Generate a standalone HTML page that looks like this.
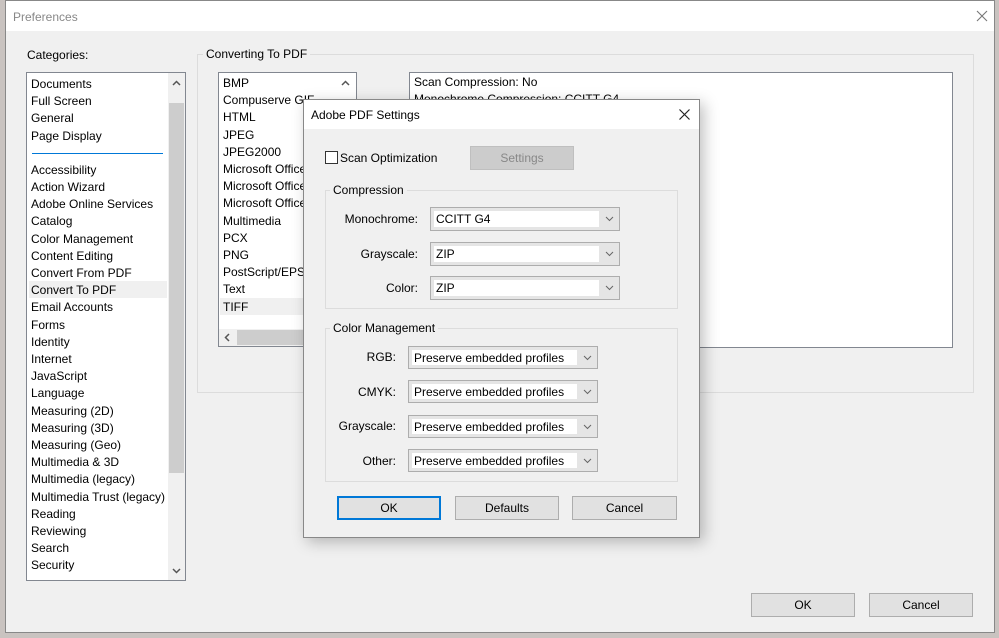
<!DOCTYPE html>
<html><head><meta charset="utf-8"><style>
*{box-sizing:border-box;margin:0;padding:0}
body{width:999px;height:638px;overflow:hidden;background:#c9c3c0;font-family:"Liberation Sans",sans-serif;font-size:12px;color:#000;position:relative}
.a{position:absolute}
.t{position:absolute;white-space:nowrap;line-height:14px}
.win{left:5px;top:0;width:990px;height:633px;background:#f0f0f0;border:1px solid #888}
.list{background:#fff;border:1px solid #828790;overflow:hidden}
.grp{border:1px solid #dcdcdc}
.lbl{background:#f0f0f0;padding:0 3px}
.btn{border:1px solid #adadad;background:#e1e1e1;text-align:center;line-height:22px}
.sel{border:1px solid #adadad;background:#e5e5e5}
.sel .in{position:absolute;left:3px;top:3px;bottom:3px;right:20px;background:#fff;padding-left:2px;line-height:16px}
.sel svg{position:absolute;right:5px;top:8px}
.r{text-align:right}
</style></head><body>
<div class="a win">
 <div class="a" style="left:0;top:0;width:988px;height:30px;background:#fff"></div>
 <div class="t" style="left:7px;top:9px;color:#888">Preferences</div>
 <svg class="a" style="left:970px;top:9px" width="12" height="12"><path d="M1 1L11 11M11 1L1 11" stroke="#777" stroke-width="1.1"/></svg>
</div>
<div class="t" style="left:27px;top:48px">Categories:</div>
<div class="a list" style="left:26px;top:72px;width:160px;height:509px">
 <div class="a" style="left:141px;top:0;width:17px;height:507px;background:#f0f0f0"></div>
 <div class="a" style="left:142px;top:30px;width:15px;height:370px;background:#cdcdcd"></div>
 <svg class="a" style="left:145px;top:7px" width="9" height="6"><path d="M1 5L4.5 1.5L8 5" stroke="#555" fill="none" stroke-width="1.5"/></svg>
 <svg class="a" style="left:145px;top:495px" width="9" height="6"><path d="M1 1L4.5 4.5L8 1" stroke="#555" fill="none" stroke-width="1.5"/></svg>
 <div class="a" style="left:5px;top:80px;width:131px;height:1px;background:#0078d7"></div>
 <div class="a" style="left:2px;top:208px;width:138px;height:17px;background:#f0f0f0"></div>
</div>
<div class="a" style="left:31px;top:76px;line-height:17.2px">
Documents<br>Full Screen<br>General<br>Page Display<br><div style="height:17px"></div>Accessibility<br>Action Wizard<br>Adobe Online Services<br>Catalog<br>Color Management<br>Content Editing<br>Convert From PDF<br>Convert To PDF<br>Email Accounts<br>Forms<br>Identity<br>Internet<br>JavaScript<br>Language<br>Measuring (2D)<br>Measuring (3D)<br>Measuring (Geo)<br>Multimedia &amp; 3D<br>Multimedia (legacy)<br>Multimedia Trust (legacy)<br>Reading<br>Reviewing<br>Search<br>Security
</div>
<div class="a" style="left:27px;top:576px;width:140px;height:4px;background:#fff"></div>
<div class="a grp" style="left:197px;top:54px;width:777px;height:339px"></div>
<div class="t lbl" style="left:203px;top:47px">Converting To PDF</div>
<div class="a list" style="left:218px;top:72px;width:139px;height:275px">
 <div class="a" style="left:1px;top:225px;width:136px;height:17px;background:#f0f0f0"></div>
 <div class="a" style="left:0;top:256px;width:137px;height:17px;background:#f0f0f0"></div>
 <div class="a" style="left:18px;top:257px;width:119px;height:15px;background:#cdcdcd"></div>
 <svg class="a" style="left:5px;top:260px" width="6" height="9"><path d="M5 1L1.5 4.5L5 8" stroke="#555" fill="none" stroke-width="1.5"/></svg>
 <svg class="a" style="left:122px;top:7px" width="9" height="6"><path d="M1 5L4.5 1.5L8 5" stroke="#555" fill="none" stroke-width="1.5"/></svg>
</div>
<div class="a" style="left:223px;top:75px;line-height:17.2px">BMP<br>Compuserve GIF<br>HTML<br>JPEG<br>JPEG2000<br>Microsoft Office<br>Microsoft Office<br>Microsoft Office<br>Multimedia<br>PCX<br>PNG<br>PostScript/EPS<br>Text<br>TIFF</div>
<div class="a list" style="left:409px;top:72px;width:544px;height:276px"></div>
<div class="t" style="left:414px;top:75px">Scan Compression: No</div>
<div class="t" style="left:414px;top:92px">Monochrome Compression: CCITT G4</div>

<div class="a" style="left:303px;top:99px;width:397px;height:439px;background:#f0f0f0;border:1px solid #888;box-shadow:4px 4px 14px rgba(0,0,0,.25)">
 <div class="a" style="left:0;top:0;width:395px;height:29px;background:#fff"></div>
 <svg class="a" style="left:375px;top:9px" width="11" height="11"><path d="M0.5 0.5L10.5 10.5M10.5 0.5L0.5 10.5" stroke="#222" stroke-width="1.2"/></svg>
</div>
<div class="t" style="left:311px;top:108px">Adobe PDF Settings</div>
<div class="a" style="left:325px;top:151px;width:13px;height:13px;border:1px solid #333;background:#fff"></div>
<div class="t" style="left:340px;top:151px">Scan Optimization</div>
<div class="a btn" style="left:470px;top:146px;width:104px;height:24px;background:#cccccc;border-color:#bfbfbf;color:#888">Settings</div>
<div class="a grp" style="left:325px;top:190px;width:353px;height:119px"></div>
<div class="t lbl" style="left:330px;top:183px">Compression</div>
<div class="t r" style="left:330px;top:212px;width:88px">Monochrome:</div>
<div class="t r" style="left:330px;top:247px;width:88px">Grayscale:</div>
<div class="t r" style="left:330px;top:281px;width:88px">Color:</div>
<div class="a sel" style="left:430px;top:207px;width:190px;height:24px"><div class="in">CCITT G4</div><svg width="9" height="6"><path d="M1 1L4.5 4.5L8 1" stroke="#666" fill="none"/></svg></div>
<div class="a sel" style="left:430px;top:242px;width:190px;height:24px"><div class="in">ZIP</div><svg width="9" height="6"><path d="M1 1L4.5 4.5L8 1" stroke="#666" fill="none"/></svg></div>
<div class="a sel" style="left:430px;top:276px;width:190px;height:24px"><div class="in">ZIP</div><svg width="9" height="6"><path d="M1 1L4.5 4.5L8 1" stroke="#666" fill="none"/></svg></div>
<div class="a grp" style="left:325px;top:328px;width:353px;height:154px"></div>
<div class="t lbl" style="left:330px;top:321px">Color Management</div>
<div class="t r" style="left:320px;top:350px;width:76px">RGB:</div>
<div class="t r" style="left:320px;top:385px;width:76px">CMYK:</div>
<div class="t r" style="left:320px;top:419px;width:76px">Grayscale:</div>
<div class="t r" style="left:320px;top:454px;width:76px">Other:</div>
<div class="a sel" style="left:408px;top:346px;width:190px;height:23px"><div class="in">Preserve embedded profiles</div><svg width="9" height="6"><path d="M1 1L4.5 4.5L8 1" stroke="#666" fill="none"/></svg></div>
<div class="a sel" style="left:408px;top:380px;width:190px;height:23px"><div class="in">Preserve embedded profiles</div><svg width="9" height="6"><path d="M1 1L4.5 4.5L8 1" stroke="#666" fill="none"/></svg></div>
<div class="a sel" style="left:408px;top:415px;width:190px;height:23px"><div class="in">Preserve embedded profiles</div><svg width="9" height="6"><path d="M1 1L4.5 4.5L8 1" stroke="#666" fill="none"/></svg></div>
<div class="a sel" style="left:408px;top:449px;width:190px;height:23px"><div class="in">Preserve embedded profiles</div><svg width="9" height="6"><path d="M1 1L4.5 4.5L8 1" stroke="#666" fill="none"/></svg></div>
<div class="a btn" style="left:337px;top:496px;width:104px;height:24px;border:2px solid #0078d7;line-height:20px">OK</div>
<div class="a btn" style="left:455px;top:496px;width:104px;height:24px">Defaults</div>
<div class="a btn" style="left:572px;top:496px;width:105px;height:24px">Cancel</div>
<div class="a btn" style="left:751px;top:593px;width:104px;height:24px">OK</div>
<div class="a btn" style="left:869px;top:593px;width:104px;height:24px">Cancel</div>
</body></html>
